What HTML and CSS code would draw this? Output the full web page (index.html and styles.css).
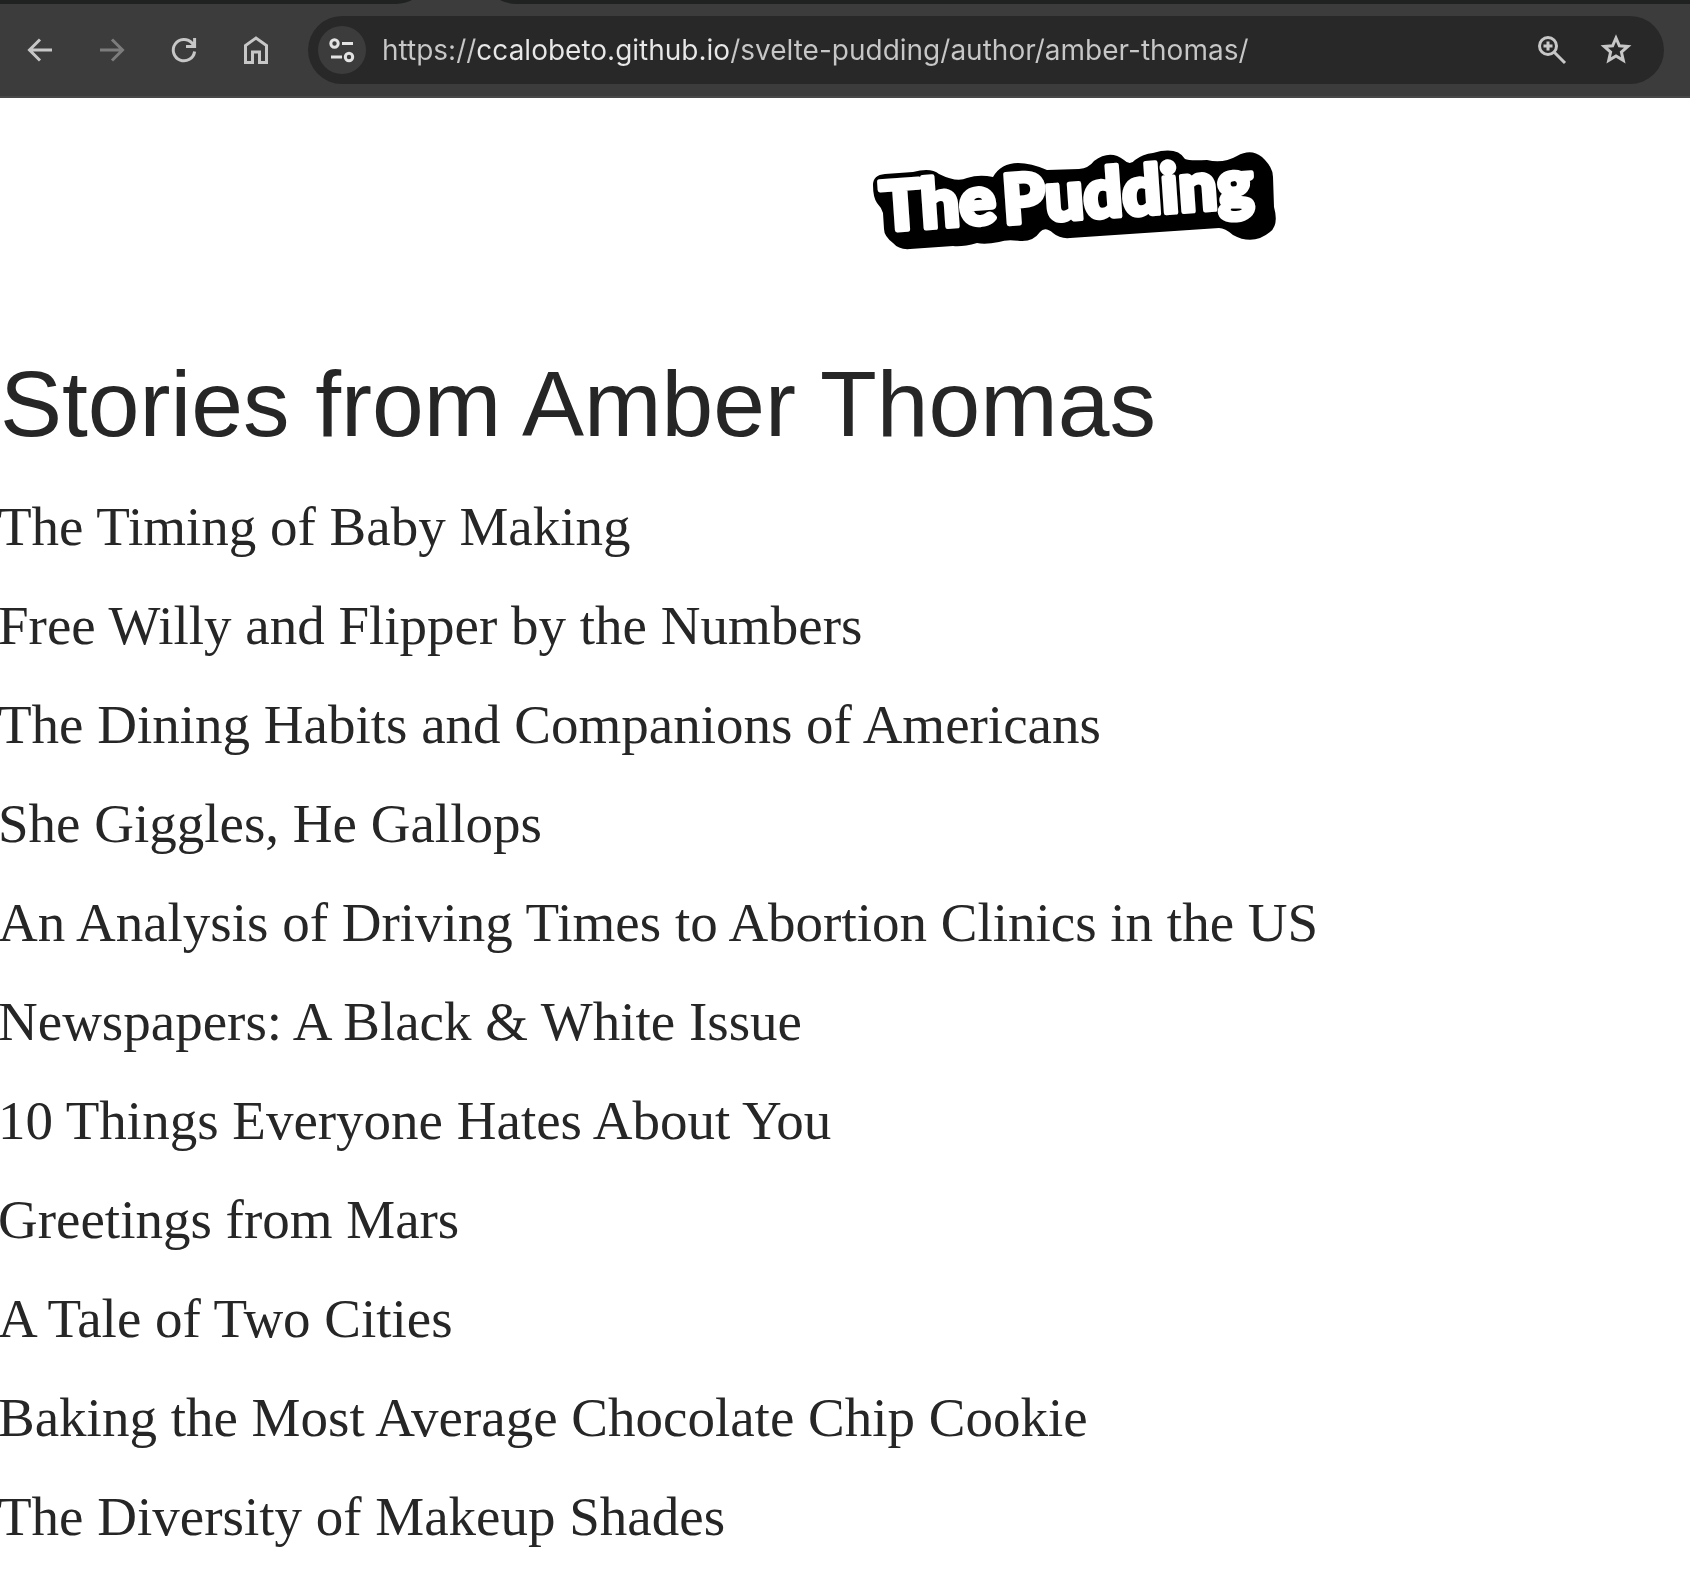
FILE: index.html
```html
<!DOCTYPE html>
<html lang="en">
<head>
<meta charset="utf-8">
<title>Stories from Amber Thomas</title>
<link rel="stylesheet" href="styles.css">
</head>
<body>
<div class="tabstrip"><svg class="tab" width="128" height="4" viewBox="0 0 128 4" aria-hidden="true"><path d="M0 4Q10 3.500 16 0H104Q110 3.500 120 4Z" fill="#3c3c3c"/></svg></div>
<div class="toolbar">
  <div class="nav">
    <button class="tool" aria-label="Back"><svg viewBox="0 0 36 36"><path d="M30 18H8M18 7.500 7.500 18 18 28.500"/></svg></button>
    <button class="tool tool-off" aria-label="Forward" disabled><svg viewBox="0 0 36 36"><path d="M6 18H28M18 7.500 28.500 18 18 28.500"/></svg></button>
    <button class="tool" aria-label="Reload"><svg viewBox="0 0 36 36"><path d="M28.600 19.500A10.700 10.700 0 1 1 26 11L28 14M28.600 6V14.500H20"/></svg></button>
    <button class="tool" aria-label="Home"><svg viewBox="0 0 36 36"><path d="M7.500 30.500V13.500L18 6L28.500 13.500V30.500H21.500V20H14.500V30.500Z"/></svg></button>
  </div>
  <div class="omnibox">
    <button class="site" aria-label="Site information"><svg viewBox="0 0 36 36"><circle cx="10.500" cy="11.500" r="3.700"/><path d="M18 11.500H29M7 25H18"/><circle cx="25" cy="25" r="3.700"/></svg></button>
    <input class="url" type="text" aria-label="Address" spellcheck="false" value="https://ccalobeto.github.io/svelte-pudding/author/amber-thomas/">
    <div class="actions">
      <button class="tool" aria-label="Zoom"><svg viewBox="0 0 36 36"><circle cx="14" cy="14" r="8.500"/><path d="M20 20 31 31M14 9.500V18.500M9.500 14H18.500"/></svg></button>
      <button class="tool" aria-label="Bookmark"><svg viewBox="0 0 36 36"><path d="M18 6 21.400 13.800 29.800 14.500 23.400 20.100 25.300 28.400 18 24 10.700 28.400 12.600 20.100 6.200 14.500 14.600 13.800Z"/></svg></button>
    </div>
  </div>
</div>
<header class="masthead">
  <a class="logo" href="#" aria-label="The Pudding">
    <svg width="404" height="100" viewBox="0 0 404 100">
      <path d="M0 36Q0 26 12 25L40 23Q58 18 66 25Q84 34 94 29Q106 25 120 28Q128 14 145 14Q158 14 174 21L206 20Q216 19 221 12Q237 0 251 11Q257 17 262 11Q270 5 280 4Q304-3 312 10Q316 12 334 11Q350 15 364 7Q378-1 389 8Q400 18 400 28L401 58Q406 76 397 83Q380 97 360 86Q352 79 346 79L197 89Q187 90 180 84Q172 77 167 83Q160 93 147 92Q134 90 126 93Q112 96 104 94Q90 98 80 97L37 100Q26 101 20 94Q11 87 11 80L10 64Q8 58 4 54Q0 48 0 36Z"/>
      <g class="wordmark">
        <text x="9" y="82" transform="rotate(-4 9 82)">The</text>
        <text x="131" y="75" transform="rotate(-4 131 75)">Pudding</text>
      </g>
    </svg>
  </a>
</header>
<main>
  <h1>Stories from Amber Thomas</h1>
  <ul class="stories">
    <li><a href="#">The Timing of Baby Making</a></li>
    <li><a href="#">Free Willy and Flipper by the Numbers</a></li>
    <li><a href="#">The Dining Habits and Companions of Americans</a></li>
    <li><a href="#">She Giggles, He Gallops</a></li>
    <li><a href="#">An Analysis of Driving Times to Abortion Clinics in the US</a></li>
    <li><a href="#">Newspapers: A Black &amp; White Issue</a></li>
    <li><a href="#">10 Things Everyone Hates About You</a></li>
    <li><a href="#">Greetings from Mars</a></li>
    <li><a href="#">A Tale of Two Cities</a></li>
    <li><a href="#">Baking the Most Average Chocolate Chip Cookie</a></li>
    <li><a href="#">The Diversity of Makeup Shades</a></li>
  </ul>
</main>
</body>
</html>
```
FILE: styles.css
```css
* { box-sizing: border-box; }
body { margin: 0; background: #fff; color: #262626; }
button { padding: 0; border: 0; background: none; color: inherit; }
svg { display: block; overflow: visible; }

.tabstrip { height: 4px; padding-left: 396px; background: #202222; }
.toolbar {
  display: flex;
  align-items: center;
  gap: 34px;
  height: 94px;
  padding: 0 26px 0 22px;
  background: #3c3c3c;
  border-bottom: 2px solid #484848;
  color: #c7c7c7;
}
.nav { display: flex; gap: 36px; }
.tool svg, .site svg { width: 36px; height: 36px; fill: none; stroke: currentColor; stroke-width: 3; }
.nav .tool { width: 36px; }
.tool-off { color: #7c7c7c; }
.omnibox {
  display: flex;
  flex: 1;
  align-items: center;
  height: 68px;
  padding: 0 30px 0 10px;
  border-radius: 34px;
  background: #282828;
}
.site {
  display: grid;
  place-items: center;
  width: 48px;
  height: 48px;
  border-radius: 50%;
  background: #3c3c3c;
  color: #e3e3e3;
}
.url {
  flex: 1;
  min-width: 0;
  margin-left: 16px;
  padding: 0;
  border: 0;
  outline: 0;
  color: #c7c7c7;
  font: 28px/40px Inter, sans-serif;
  background: linear-gradient(90deg, #c7c7c7 94px, #e8e8e8 94px 347px, #c7c7c7 347px);
  -webkit-background-clip: text;
  background-clip: text;
  -webkit-text-fill-color: transparent;
}
.actions { display: flex; gap: 28px; }

.masthead {
  display: flex;
  justify-content: center;
  margin-left: 460px;
  padding: 51px 0 99px;
}
.wordmark {
  fill: #fff;
  stroke: #fff;
  stroke-width: 5;
  stroke-linejoin: round;
  font: 900 68px Lato, sans-serif;
}

h1 {
  margin: 0;
  font: 400 93px/112px "Liberation Sans", sans-serif;
}
.stories {
  margin: 17px 0 0 -2px;
  padding: 0;
  list-style: none;
  font: 55px/99px "Liberation Serif", serif;
}
.stories a { color: inherit; text-decoration: none; }
```
